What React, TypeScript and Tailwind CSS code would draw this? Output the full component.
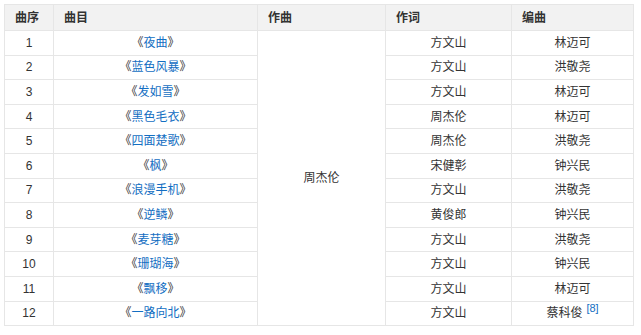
const songs = [
  { no: 1, title: "夜曲", lyric: "方文山", arr: "林迈可" },
  { no: 2, title: "蓝色风暴", lyric: "方文山", arr: "洪敬尧" },
  { no: 3, title: "发如雪", lyric: "方文山", arr: "林迈可" },
  { no: 4, title: "黑色毛衣", lyric: "周杰伦", arr: "林迈可" },
  { no: 5, title: "四面楚歌", lyric: "周杰伦", arr: "洪敬尧" },
  { no: 6, title: "枫", lyric: "宋健彰", arr: "钟兴民" },
  { no: 7, title: "浪漫手机", lyric: "方文山", arr: "洪敬尧" },
  { no: 8, title: "逆鳞", lyric: "黄俊郎", arr: "钟兴民" },
  { no: 9, title: "麦芽糖", lyric: "方文山", arr: "洪敬尧" },
  { no: 10, title: "珊瑚海", lyric: "方文山", arr: "钟兴民" },
  { no: 11, title: "飘移", lyric: "方文山", arr: "林迈可" },
  { no: 12, title: "一路向北", lyric: "方文山", arr: "蔡科俊", ref: "[8]" },
];

const cell = "border border-[#e6e6e6] p-0";

export default function App() {
  return (
    <div
      className="w-[641px] h-[335px] bg-white pt-[4px] pl-[4px] text-[12px] text-[#333]"
      style={{ fontFamily: '"Liberation Sans", "Noto Sans CJK SC", sans-serif' }}
    >
      <table className="table-fixed border-collapse w-[629px]">
        <colgroup>
          <col className="w-[49px]" />
          <col className="w-[204px]" />
          <col className="w-[128px]" />
          <col className="w-[126px]" />
          <col className="w-[122px]" />
        </colgroup>
        <thead>
          <tr className="h-[26px] bg-[#f2f2f2] text-left font-bold">
            <th className={`${cell} pl-[10px]`}>曲序</th>
            <th className={`${cell} pl-[10px]`}>曲目</th>
            <th className={`${cell} pl-[10px]`}>作曲</th>
            <th className={`${cell} pl-[10px]`}>作词</th>
            <th className={`${cell} pl-[10px]`}>编曲</th>
          </tr>
        </thead>
        <tbody>
          {songs.map((s, i) => (
            <tr key={s.no} className="h-[24.6px] text-center">
              <td className={cell}>{s.no}</td>
              <td className={cell}>
                《<a className="text-[#136ec2]">{s.title}</a>》
              </td>
              {i === 0 && (
                <td className={cell} rowSpan={12}>
                  周杰伦
                </td>
              )}
              <td className={cell}>{s.lyric}</td>
              <td className={cell}>
                {s.arr}
                {s.ref && (
                  <sup className="ml-[4px] text-[11px] text-[#136ec2]">{s.ref}</sup>
                )}
              </td>
            </tr>
          ))}
        </tbody>
      </table>
    </div>
  );
}
